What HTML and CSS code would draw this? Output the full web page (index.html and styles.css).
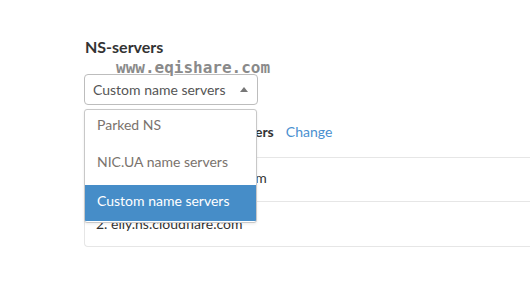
FILE: index.html
```html
<!DOCTYPE html>
<html lang="en">
<head>
    <meta charset="UTF-8">
    <meta name="viewport" content="width=device-width, initial-scale=1.0">
    <title>NS-servers</title>
    <link rel="stylesheet" href="styles.css">
</head>
<body>
<div class="page">
    <h2 class="title">NS-servers</h2>
    <div class="select-wrap">
        <div class="select">
            <span>Custom name servers</span>
            <span class="arrow"></span>
        </div>
        <ul class="menu">
            <li>Parked NS</li>
            <li>NIC.UA name servers</li>
            <li class="active">Custom name servers</li>
        </ul>
        <div class="watermark">www.eqishare.com</div>
    </div>

    <div class="current">
        <span class="current-name">Current: Custom name servers</span>
        <a href="#" class="change">Change</a>
    </div>

    <div class="card">
        <div class="row">1. kristina.ns.cloudflare.com</div>
        <div class="row">2. elly.ns.cloudflare.com</div>
    </div>
</div>
</body>
</html>
```

FILE: styles.css
```css
body {
    margin: 0;
    font-family: Lato, "Open Sans", sans-serif;
    background-color: #fff;
    color: #333;
}
.page {
    padding: 37px 0 0 85px;
}
.title {
    margin: 0;
    font-size: 16px;
    font-weight: 700;
    line-height: 19px;
    color: #333;
}
.select-wrap {
    position: relative;
    margin-top: 18px;
    width: 173px;
}
.select {
    display: flex;
    align-items: center;
    justify-content: space-between;
    box-sizing: border-box;
    height: 31px;
    margin-left: -1px;
    padding: 0 9px 0 8px;
    border: 1px solid #bdbdbd;
    border-radius: 4px;
    font-size: 14px;
    color: #555;
}
.arrow {
    width: 0;
    height: 0;
    border-left: 4px solid transparent;
    border-right: 4px solid transparent;
    border-bottom: 5px solid #777;
}
.menu {
    position: absolute;
    top: 35px;
    left: -1px;
    z-index: 2;
    width: 173px;
    margin: 0;
    padding: 0 0 1px;
    list-style: none;
    box-sizing: border-box;
    background-color: #fff;
    border: 1px solid #c8c8c8;
    border-radius: 3px;
    box-shadow: 0 1px 3px rgba(0, 0, 0, 0.08);
    overflow: hidden;
}
.menu li {
    line-height: 30px;
    margin-bottom: 7px;
    padding-left: 12px;
    font-size: 14px;
    color: #7a736d;
}
.menu li:nth-child(2) {
    margin-bottom: 8px;
}
.menu li.active {
    line-height: 32px;
    padding-bottom: 4px;
    margin-bottom: 0;
    background-color: #468dc8;
    color: #fff;
}
.watermark {
    position: absolute;
    top: -14px;
    left: 31px;
    z-index: 3;
    font-family: "DejaVu Sans Mono", monospace;
    font-size: 16px;
    line-height: 16px;
    font-weight: 700;
    color: #8a8a8a;
    text-shadow: 1px 1px 0 #fff, -1px -1px 0 #fff, 1px -1px 0 #fff, -1px 1px 0 #fff;
    white-space: nowrap;
}
.current {
    display: flex;
    align-items: center;
    gap: 12px;
    height: 52px;
    font-size: 14px;
}
.current-name {
    font-weight: 700;
    color: #333;
}
.change {
    color: #4a90d0;
    text-decoration: none;
}
.card {
    border: 1px solid #e6e6e6;
    border-right: none;
    border-radius: 4px 0 0 4px;
    margin-left: -1px;
}
.row {
    height: 44px;
    line-height: 44px;
    padding-left: 11px;
    font-size: 14px;
    color: #333;
}
.row:first-child {
    height: 43px;
    line-height: 40px;
}
.row + .row {
    border-top: 1px solid #e6e6e6;
}
```
